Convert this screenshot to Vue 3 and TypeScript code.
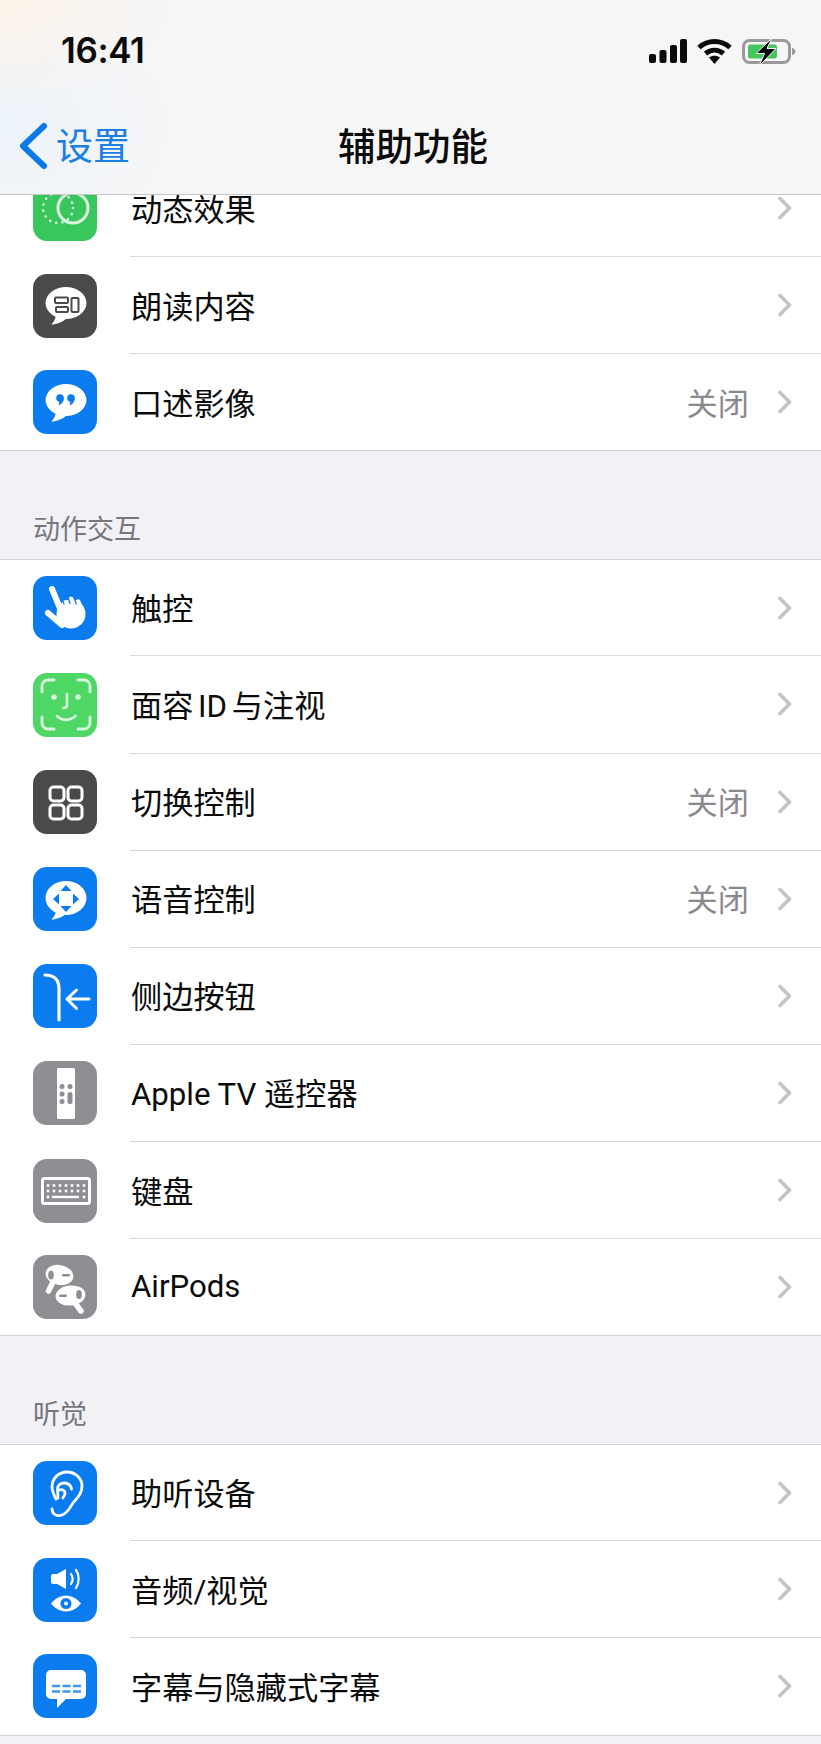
<script setup lang="ts">
interface Row {
  label: string
  icon: string
  tint: 'blue' | 'green' | 'lime' | 'dark' | 'grey'
  value?: string
  tight?: boolean
}

interface Group {
  title?: string
  rows: Row[]
}

const groups: Group[] = [
  {
    rows: [
      { label: '动态效果', icon: 'motion', tint: 'green' },
      { label: '朗读内容', icon: 'speak', tint: 'dark' },
      { label: '口述影像', icon: 'quote', tint: 'blue', value: '关闭' }
    ]
  },
  {
    title: '动作交互',
    rows: [
      { label: '触控', icon: 'touch', tint: 'blue' },
      { label: '面容 ID 与注视', icon: 'face', tint: 'lime', tight: true },
      { label: '切换控制', icon: 'switch', tint: 'dark', value: '关闭' },
      { label: '语音控制', icon: 'voice', tint: 'blue', value: '关闭' },
      { label: '侧边按钮', icon: 'side', tint: 'blue' },
      { label: 'Apple TV 遥控器', icon: 'remote', tint: 'grey' },
      { label: '键盘', icon: 'keyboard', tint: 'grey' },
      { label: 'AirPods', icon: 'airpods', tint: 'grey' }
    ]
  },
  {
    title: '听觉',
    rows: [
      { label: '助听设备', icon: 'ear', tint: 'blue' },
      { label: '音频/视觉', icon: 'av', tint: 'blue' },
      { label: '字幕与隐藏式字幕', icon: 'captions', tint: 'blue' }
    ]
  }
]

const keyRows = [
  { y: 26.5, xs: [14, 20, 26, 32, 38, 44, 50] },
  { y: 32, xs: [14, 20, 26, 32, 38, 44, 50] },
  { y: 38, xs: [14, 50] }
]
</script>

<template>
  <div class="phone">
    <header class="nav">
      <div class="status">
        <span class="time">16:41</span>
        <div class="status-icons">
          <svg class="signal" width="38" height="24" viewBox="0 0 38 24">
            <rect x="0" y="15" width="7" height="9" rx="2" />
            <rect x="10.5" y="11" width="7" height="13" rx="2" />
            <rect x="21" y="6" width="7" height="18" rx="2" />
            <rect x="31" y="0" width="7" height="24" rx="2" />
          </svg>
          <svg class="wifi" width="35" height="25" viewBox="0 0 35 25">
            <path d="M2 8.500C11 .5 24 .5 33 8.500" />
            <path d="M8.500 14.500C14 10 21 10 26.500 14.500" />
            <path class="wifi-dot" d="M12 18.500C15.500 16 19.500 16 23 18.500L17.500 25z" />
          </svg>
          <svg class="battery" width="54" height="25" viewBox="0 0 54 25">
            <rect x="1.500" y="1.500" width="46" height="22" rx="6" fill="none" stroke="#9a9a9c" stroke-width="3" />
            <rect x="6" y="5.500" width="29" height="14" rx="2.500" fill="#45c65c" />
            <path d="M50 9c2.400.6 3.500 2 3.500 3.500s-1.100 2.900-3.500 3.500z" fill="#9a9a9c" />
            <path d="M30 -1 14 14.500h8.500L17 27 34 9.500h-9z" fill="#0c0c0c" stroke="#f6f6f7" stroke-width="1" />
          </svg>
        </div>
      </div>
      <div class="bar">
        <div class="back">
          <svg width="34" height="50" viewBox="0 0 34 50">
            <path d="M28 5 7 25l21 20" />
          </svg>
          <span>设置</span>
        </div>
        <h1>辅助功能</h1>
      </div>
    </header>

    <main class="list">
      <section v-for="group in groups" :key="group.title ?? 'top'">
        <h2 v-if="group.title" class="group-title">{{ group.title }}</h2>
        <ul class="rows">
          <li v-for="row in group.rows" :key="row.label" class="row">
            <span class="icon" :class="row.tint">
              <svg width="63" height="63" viewBox="0 0 63 63">
                <template v-if="row.icon === 'motion'">
                  <circle cx="39" cy="31" r="15" fill="none" stroke="#d9f4df" stroke-width="3" />
                  <circle cx="24" cy="31" r="15" fill="none" stroke="#d9f4df" stroke-width="2.600" stroke-linecap="round" stroke-dasharray="0 6.300" />
                </template>

                <template v-else-if="row.icon === 'speak'">
                  <ellipse cx="32" cy="29" rx="20.500" ry="16" fill="#fff" />
                  <path d="M22 40c0 4-2 8-4.500 10.500 5 0 11-2.500 15-6z" fill="#fff" />
                  <g fill="none" stroke="#4a4a4b" stroke-width="2">
                    <rect x="21" y="23.500" width="13" height="5.500" rx="1" />
                    <rect x="22" y="33" width="12" height="5" rx="1" />
                    <rect x="37.500" y="24" width="7" height="14" rx="1" />
                  </g>
                </template>

                <template v-else-if="row.icon === 'quote'">
                  <ellipse cx="32" cy="29" rx="20.500" ry="16" fill="#fff" />
                  <path d="M22 40c0 4-2 8-4.500 10.500 5 0 11-2.500 15-6z" fill="#fff" />
                  <g fill="#0a7cf0">
                    <circle cx="26" cy="27" r="3.800" />
                    <path d="M29.800 27c0 4-2.500 6.500-5.500 7.500 1-2 1-3 .7-4z" />
                    <circle cx="37" cy="27" r="3.800" />
                    <path d="M40.800 27c0 4-2.500 6.500-5.500 7.500 1-2 1-3 .7-4z" />
                  </g>
                </template>

                <template v-else-if="row.icon === 'touch'">
                  <circle cx="37" cy="37" r="14.500" fill="#fff" />
                  <path d="M18 12 28 36M14 36l14 12" fill="none" stroke="#fff" stroke-width="6" stroke-linecap="round" />
                  <path d="M31 26l3 9M37 22.500l3 10M44 25l3 9" fill="none" stroke="#fff" stroke-width="5.500" stroke-linecap="round" />
                  <path d="M27.500 21l2.500 6M34 20l2 6.500M40.500 22l1.800 5" fill="none" stroke="#0a7cf0" stroke-width="1.300" stroke-linecap="round" />
                </template>

                <template v-else-if="row.icon === 'face'">
                  <path d="M8 19v-6a6 6 0 0 1 6-6h6M44 7h6a6 6 0 0 1 6 6v6M8 44v6a6 6 0 0 0 6 6h6M44 56h6a6 6 0 0 0 6-6v-6" fill="none" stroke="#d5f6dc" stroke-width="2.800" stroke-linecap="round" />
                  <circle cx="20" cy="24" r="2.800" fill="#d5f6dc" />
                  <circle cx="44" cy="24" r="2.800" fill="#d5f6dc" />
                  <path d="M33 21v11c0 2-1 3-3.500 3" fill="none" stroke="#d5f6dc" stroke-width="2.600" stroke-linecap="round" />
                  <path d="M23 43c5 5 13 5 18.500 0" fill="none" stroke="#d5f6dc" stroke-width="2.800" stroke-linecap="round" />
                </template>

                <template v-else-if="row.icon === 'switch'">
                  <g fill="none" stroke="#fff" stroke-width="3">
                    <rect x="16" y="16" width="14" height="14" rx="3.500" />
                    <rect x="34" y="16" width="14" height="14" rx="3.500" />
                    <rect x="16" y="34" width="14" height="14" rx="3.500" />
                    <rect x="34" y="34" width="14" height="14" rx="3.500" />
                  </g>
                </template>

                <template v-else-if="row.icon === 'voice'">
                  <ellipse cx="32" cy="30" rx="20.500" ry="17" fill="#fff" />
                  <path d="M22 42c0 4-2 7-4.500 9.500 5 0 11-2.500 15-6z" fill="#fff" />
                  <g fill="#0a7cf0">
                    <path d="M32 17l5.500 6h-11z" />
                    <path d="M32 44l5.500-6h-11z" />
                    <path d="M19 31l6-5.500v11z" />
                    <path d="M45 31l-6-5.500v11z" />
                  </g>
                </template>

                <template v-else-if="row.icon === 'side'">
                  <path d="M11 10c9 0 14 4 14 14v31" fill="none" stroke="#fff" stroke-width="3.200" stroke-linecap="round" />
                  <path d="M55 34H33M42.500 25 33 34l9.500 9.500" fill="none" stroke="#fff" stroke-width="3" stroke-linecap="round" stroke-linejoin="round" />
                </template>

                <template v-else-if="row.icon === 'remote'">
                  <rect x="23" y="6" width="18" height="51" rx="1.500" fill="#fff" />
                  <g fill="#8e8e93">
                    <circle cx="28" cy="24.500" r="2.500" />
                    <circle cx="36" cy="24.500" r="2.500" />
                    <circle cx="28" cy="32" r="2.500" />
                    <circle cx="28" cy="39.500" r="2.500" />
                    <rect x="33.500" y="30" width="5" height="12" rx="2.500" />
                  </g>
                </template>

                <template v-else-if="row.icon === 'keyboard'">
                  <rect x="8.500" y="19.500" width="47" height="25" rx="2" fill="none" stroke="#fff" stroke-width="3" />
                  <g fill="#fff">
                    <template v-for="line in keyRows" :key="line.y">
                      <rect v-for="x in line.xs" :key="x" :x="x - 1.300" :y="line.y - 1.300" width="2.600" height="2.600" />
                    </template>
                    <rect x="18" y="36.800" width="27" height="2.400" />
                  </g>
                </template>

                <template v-else-if="row.icon === 'airpods'">
                  <path d="M19 26 14.500 35" fill="none" stroke="#fff" stroke-width="5.500" stroke-linecap="round" />
                  <ellipse cx="25.500" cy="19" rx="14" ry="10" fill="#fff" transform="rotate(10 25.500 19)" />
                  <ellipse cx="17" cy="19" rx="2.800" ry="4.500" fill="#8e8e93" />
                  <rect x="28" y="18" width="8" height="2.400" rx="1.200" fill="#8e8e93" />
                  <path d="M41 47 47 55" fill="none" stroke="#fff" stroke-width="5.500" stroke-linecap="round" />
                  <ellipse cx="36.500" cy="39.500" rx="15" ry="10" fill="#fff" transform="rotate(-6 36.500 39.500)" />
                  <ellipse cx="45" cy="38.500" rx="2.800" ry="4.500" fill="#8e8e93" />
                  <rect x="25" y="38.500" width="8" height="2.400" rx="1.200" fill="#8e8e93" />
                </template>

                <template v-else-if="row.icon === 'ear'">
                  <g fill="none" stroke="#fff" stroke-width="2.800" stroke-linecap="round" stroke-linejoin="round">
                    <path d="M18 47c0 5 5 8 10 6 6-2 8-8 11-12 4-5 9-9 9-17 0-8-7-14-15-14-8 0-15 6-15 15 0 4 2 8 4 12" />
                    <path d="M24 36l-.5-9c0-4 3-6 7-6 4 0 7 3 7 6" />
                    <path d="M25 28c3-1 6 0 6 3 0 2-1.500 3-2 5" />
                  </g>
                </template>

                <template v-else-if="row.icon === 'av'">
                  <path d="M17 18a2 2 0 0 1 2-2h4l9-5v20l-9-5h-4a2 2 0 0 1-2-2z" fill="#fff" />
                  <g fill="none" stroke="#fff" stroke-width="2.200" stroke-linecap="round">
                    <path d="M37 16c2 3 2 7 0 10" />
                    <path d="M42 12c3.500 5 3.500 13 0 18" />
                  </g>
                  <path d="M17 45.500C25 35 39 35 47 45.500 39 56 25 56 17 45.500z" fill="#fff" />
                  <circle cx="32" cy="45.500" r="5.500" fill="#0a7cf0" />
                  <circle cx="32" cy="45.500" r="2" fill="#fff" />
                </template>

                <template v-else-if="row.icon === 'captions'">
                  <path d="M17 15h30a5 5 0 0 1 5 5v19a5 5 0 0 1-5 5H32l-9 9v-9h-6a5 5 0 0 1-5-5V20a5 5 0 0 1 5-5z" fill="#fff" />
                  <path d="M18 31h29M18 36.500h29" fill="none" stroke="#3d96f3" stroke-width="2.400" stroke-dasharray="8 2.500" />
                </template>
              </svg>
            </span>
            <div class="row-body">
              <span class="label" :class="{ tight: row.tight }">{{ row.label }}</span>
              <span v-if="row.value" class="value">{{ row.value }}</span>
              <svg class="chevron" width="16" height="24" viewBox="0 0 16 24">
                <path d="M3 2.500 12.500 12 3 21.500" />
              </svg>
            </div>
          </li>
        </ul>
      </section>
    </main>
  </div>
</template>

<style scoped>
.phone {
  position: relative;
  width: 821px;
  height: 1744px;
  overflow: hidden;
  background: #f1f1f6;
  font-family: Inter, "Noto Sans CJK SC", sans-serif;
  color: #0b0b0b;
}

/* 顶部导航盖在列表上面 */
.nav {
  position: absolute;
  top: 0;
  left: 0;
  right: 0;
  z-index: 2;
  height: 194px;
  border-bottom: 1px solid #c6c6c8;
  background:
    radial-gradient(ellipse 170px 110px at 0 0, #fcf2e8, rgba(252, 242, 232, 0)),
    radial-gradient(ellipse 170px 130px at 0 125px, #ecf3fa, rgba(236, 243, 250, 0)),
    #f6f6f7;
}

.status {
  display: flex;
  justify-content: space-between;
  align-items: center;
  height: 102px;
  padding: 0 25px 0 61px;
}

.time {
  padding-bottom: 2px;
  font-size: 35px;
  font-weight: 600;
  letter-spacing: -0.4px;
}

.status-icons {
  display: flex;
  align-items: center;
  gap: 10px;
}

.signal {
  fill: #0a0a0a;
}

.wifi path {
  fill: none;
  stroke: #0a0a0a;
  stroke-width: 5;
}

.wifi .wifi-dot {
  fill: #0a0a0a;
  stroke: none;
}

.bar {
  position: relative;
  display: flex;
  justify-content: center;
  align-items: center;
  height: 88px;
}

.back {
  position: absolute;
  left: 16px;
  top: 0;
  bottom: 0;
  display: flex;
  align-items: center;
  gap: 6px;
  color: #1b7fe3;
  font-size: 37px;
}

.back span {
  padding-bottom: 4px;
}

.back svg path {
  fill: none;
  stroke: #0c7ae6;
  stroke-width: 6;
  stroke-linecap: round;
  stroke-linejoin: round;
}

.bar h1 {
  margin: 0 0 0 5px;
  padding-bottom: 5px;
  font-size: 37.5px;
  font-weight: 500;
}

.list {
  padding-top: 160px;
}

.group-title {
  margin: 0;
  height: 108px;
  padding: 0 0 12px 33px;
  display: flex;
  align-items: flex-end;
  box-sizing: border-box;
  font-size: 27px;
  font-weight: 400;
  color: #77777b;
}

.rows {
  margin: 0;
  padding: 0;
  list-style: none;
  background: #fff;
  border-bottom: 1px solid #d4d4d7;
}

.group-title + .rows {
  border-top: 1px solid #d4d4d7;
}

.row {
  display: flex;
  align-items: center;
  height: 97.14px;
  box-sizing: border-box;
}

.group-title + .rows .row:first-child {
  height: 96px;
}

.row:last-child {
  height: 96.14px;
}

.icon {
  flex: none;
  width: 64px;
  height: 64px;
  margin-left: 33px;
  border-radius: 14px;
  display: flex;
  align-items: center;
  justify-content: center;
}

.icon.blue {
  background: #0a7cf0;
}

.icon.green {
  background: #39c65c;
}

.icon.lime {
  background: #4fd766;
}

.icon.dark {
  background: #4a4a4b;
}

.icon.grey {
  background: #8e8e93;
}

.row-body {
  flex: 1;
  height: 100%;
  margin-left: 33px;
  padding-right: 28px;
  box-sizing: border-box;
  display: flex;
  align-items: center;
  border-bottom: 1px solid #d9d9dc;
}

.row:last-child .row-body {
  border-bottom: none;
}

.label {
  flex: 1;
  padding: 0 0 2px 1px;
  font-family: Roboto, "Noto Sans CJK SC", sans-serif;
  font-size: 31.2px;
}

.label.tight {
  word-spacing: -3px;
}

.value {
  margin-right: 28px;
  padding-bottom: 2px;
  font-size: 31.2px;
  color: #8a8a8e;
}

.chevron path {
  fill: none;
  stroke: #c4c4c7;
  stroke-width: 3.6;
  stroke-linecap: round;
  stroke-linejoin: round;
}
</style>

<style>
html,
body {
  margin: 0;
  background: #f1f1f6;
}
</style>
